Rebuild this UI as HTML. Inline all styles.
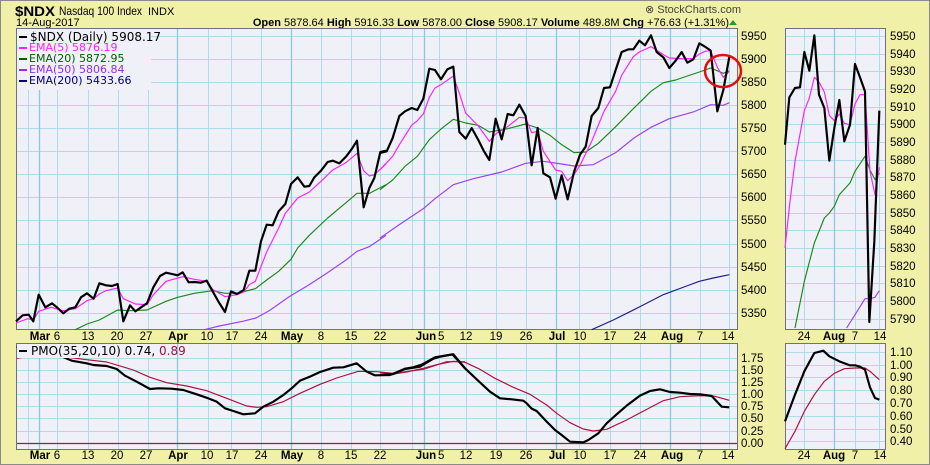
<!DOCTYPE html>
<html><head><meta charset="utf-8"><style>
html,body{margin:0;padding:0;background:#f0f0a8;}
svg{display:block;font-family:"Liberation Sans",sans-serif;}
</style></head><body>
<svg width="930" height="465" viewBox="0 0 930 465" xmlns="http://www.w3.org/2000/svg">
<rect x="0.5" y="0.5" width="929" height="464" fill="#f0f0a8" stroke="#8a8a8a"/>
<!-- header -->
<text x="15" y="16" font-size="14" font-weight="bold" fill="#000" textLength="40" lengthAdjust="spacingAndGlyphs">$NDX</text>
<text x="59" y="15" font-size="12" fill="#000" textLength="83" lengthAdjust="spacingAndGlyphs">Nasdaq 100 Index</text>
<text x="148" y="15" font-size="11" fill="#000">INDX</text>
<text x="16" y="26" font-size="11" fill="#000">14-Aug-2017</text>
<text x="645" y="13" font-size="11" fill="#444">⊗ StockCharts.com</text>
<text x="729" y="26" font-size="11" fill="#000" text-anchor="end"><tspan font-weight="bold">Open</tspan> 5878.64 <tspan font-weight="bold">High</tspan> 5916.33 <tspan font-weight="bold">Low</tspan> 5878.00 <tspan font-weight="bold">Close</tspan> 5908.17 <tspan font-weight="bold">Volume</tspan> 489.8M <tspan font-weight="bold">Chg</tspan> +76.63 (+1.31%)</text>
<polygon points="729,25 737,25 733,20" fill="#2a9a2a"/>

<!-- main panel -->
<rect x="16.5" y="28.5" width="721" height="301" fill="#eff0f8" stroke="#707080"/>
<g stroke="#b0dcea" stroke-width="1">
<path d="M17 36.5H737M17 59.5H737M17 82.5H737M17 105.5H737M17 128.5H737M17 151.5H737M17 174.5H737M17 197.5H737M17 220.5H737M17 244.5H737M17 267.5H737M17 290.5H737M17 313.5H737"/>
<path d="M28.5 29V329M57.5 29V329M88.5 29V329M118.5 29V329M148.5 29V329M208.5 29V329M231.5 29V329M261.5 29V329M321.5 29V329M351.5 29V329M380.5 29V329M412.5 29V329M439.5 29V329M466.5 29V329M496.5 29V329M526.5 29V329M579.5 29V329M610.5 29V329M640.5 29V329M700.5 29V329M729.5 29V329"/>
</g>
<g stroke="#90c8dc" stroke-width="1.3"><path d="M39.5 29V329M177.5 29V329M291.5 29V329M424.5 29V329M556.5 29V329M670.5 29V329"/></g>
<g fill="none" stroke-linejoin="round">
<g transform="translate(16,28) scale(0.33333)">
<polyline stroke="#1a8a1a" stroke-width="3.5" points="178,905 213,888 250,876 305,846 340,848 393,846 450,820 485,808 535,796 590,788 627,796 663,796 718,782 752,756 788,730 825,694 845,660 880,622 935,570 990,524 1023,496 1060,496 1110,470"/>
<polyline stroke="#a040f0" stroke-width="3.5" points="565,905 610,894 680,880 720,870 760,848 820,806 880,770 935,734 990,696 1023,670 1060,656 1110,622"/>
<polyline stroke="#ff20ff" stroke-width="3.5" points="0,885 35,872 52,876 68,850 105,838 140,848 178,842 213,818 233,812 250,798 270,788 305,780 322,812 358,828 393,830 412,800 450,760 500,746 535,754 572,760 590,784 627,806 663,800 683,792 700,770 718,760 752,672 788,600 808,556 845,510 880,492 915,460 950,426 990,404 1023,376 1043,428 1060,444 1075,440 1110,408"/>
<polyline stroke="#000" stroke-width="6.5" points="0,880 20,862 38,860 52,880 68,800 88,838 108,826 125,840 142,856 160,842 178,838 195,808 213,796 233,812 250,766 270,772 288,774 305,768 322,880 342,832 358,850 375,838 393,826 412,778 432,744 450,734 468,738 485,742 500,733 518,763 535,762 555,764 572,758 590,790 608,822 627,852 645,790 663,798 683,786 700,728 718,728 735,640 752,590 770,592 788,550 808,528 825,468 845,448 865,476 880,474 895,448 915,428 935,402 950,398 970,406 990,386 1008,362 1023,338 1043,538 1060,480 1075,450 1093,372 1110,368"/>
</g>
<g transform="translate(380,28) scale(0.33333)">
<polyline stroke="#20208a" stroke-width="3.5" points="635,905 700,876 780,836 850,800 920,774 958,760 1000,750 1048,740"/>
<polyline stroke="#a040f0" stroke-width="3.5" points="0,630 58,590 130,542 165,512 220,470 280,452 365,432 437,406 490,400 545,408 582,414 640,410 707,374 762,330 813,298 868,272 940,252 992,230 1030,232 1048,224"/>
<polyline stroke="#1a8a1a" stroke-width="3.5" points="0,485 38,456 75,415 112,385 148,335 183,303 220,274 257,285 295,292 328,312 383,302 437,288 473,300 510,322 545,350 582,374 617,372 655,346 707,296 762,240 813,190 850,164 887,156 922,144 958,132 992,120 1030,136 1048,128"/>
<polyline stroke="#ff20ff" stroke-width="3.5" points="0,425 38,385 58,350 95,292 112,278 130,258 148,208 165,180 183,170 220,144 238,196 257,255 295,294 328,340 347,318 383,296 418,268 437,270 455,314 473,310 490,370 527,426 545,430 563,458 582,440 600,412 635,340 672,250 707,190 725,142 760,86 778,72 813,56 850,80 868,90 905,92 940,92 958,78 975,70 992,68 1012,118 1030,148 1048,130"/>
<polyline stroke="#000" stroke-width="6.5" points="0,375 20,370 38,330 58,264 75,250 95,240 112,246 130,212 148,122 165,126 183,154 202,124 220,116 238,312 257,332 275,300 295,336 312,370 328,396 347,272 365,334 383,258 400,262 418,230 437,264 455,412 473,300 490,436 510,448 527,512 545,442 563,514 582,432 600,380 617,356 635,264 655,240 672,180 690,178 707,126 725,72 745,64 760,64 778,38 795,52 813,22 830,72 850,88 868,120 887,98 905,72 922,104 940,94 958,46 975,56 992,68 1012,250 1030,186 1048,86"/>
</g>
</g>
<ellipse cx="723" cy="71" rx="18" ry="16" fill="none" stroke="#e01010" stroke-width="2.5"/>
<!-- legend -->
<rect x="17" y="29" width="134" height="61" fill="#eff0f8"/>
<g font-size="11" font-family="'DejaVu Sans','Liberation Sans',sans-serif">
<rect x="19" y="36" width="8" height="2" fill="#000"/><text x="30" y="41" fill="#000" font-size="12">$NDX (Daily) 5908.17</text>
<rect x="19" y="47" width="8" height="2" fill="#ff20ff"/><text x="29" y="51" fill="#ff20ff">EMA(5) 5876.19</text>
<rect x="19" y="58" width="8" height="2" fill="#006000"/><text x="29" y="62" fill="#006000">EMA(20) 5872.95</text>
<rect x="19" y="69" width="8" height="2" fill="#9030e0"/><text x="29" y="73" fill="#9030e0">EMA(50) 5806.84</text>
<rect x="19" y="80" width="8" height="2" fill="#000080"/><text x="29" y="84" fill="#000080">EMA(200) 5433.66</text>
</g>
<!-- main y labels -->
<g font-size="11.5" fill="#000">
<text x="741" y="40">5950</text><text x="741" y="63">5900</text><text x="741" y="86">5850</text><text x="741" y="109">5800</text><text x="741" y="132">5750</text><text x="741" y="155">5700</text><text x="741" y="178">5650</text><text x="741" y="201">5600</text><text x="741" y="224">5550</text><text x="741" y="248">5500</text><text x="741" y="271">5450</text><text x="741" y="294">5400</text><text x="741" y="317">5350</text>
</g>
<!-- date labels -->
<g font-size="11.5" fill="#000" text-anchor="middle">
<g id="d1">
<text x="40" y="340" font-weight="bold" text-anchor="middle">Mar</text><text x="57" y="340">6</text><text x="88" y="340">13</text><text x="117" y="340">20</text><text x="146" y="340">27</text><text x="178" y="340" font-weight="bold">Apr</text><text x="207" y="340">10</text><text x="232" y="340">17</text><text x="261" y="340">24</text><text x="292" y="340" font-weight="bold">May</text><text x="321" y="340">8</text><text x="351" y="340">15</text><text x="380" y="340">22</text><text x="426" y="340" font-weight="bold">Jun</text><text x="438" y="340" text-anchor="start">5</text><text x="466" y="340">12</text><text x="496" y="340">19</text><text x="526" y="340">26</text><text x="557" y="340" font-weight="bold">Jul</text><text x="580" y="340">10</text><text x="610" y="340">17</text><text x="640" y="340">24</text><text x="672" y="340" font-weight="bold">Aug</text><text x="700" y="340">7</text><text x="728" y="340">14</text>
<text x="804" y="340">24</text><text x="834" y="340" font-weight="bold">Aug</text><text x="855" y="340">7</text><text x="880" y="340">14</text>
</g>
<use href="#d1" y="119"/>
</g>

<!-- small panel -->
<rect x="785.5" y="28.5" width="100" height="301" fill="#eff0f8" stroke="#707080"/>
<g stroke="#b0dcea"><path d="M786 36.5H885M786 54.5H885M786 71.5H885M786 89.5H885M786 107.5H885M786 124.5H885M786 142.5H885M786 160.5H885M786 177.5H885M786 195.5H885M786 213.5H885M786 230.5H885M786 248.5H885M786 266.5H885M786 283.5H885M786 301.5H885M786 319.5H885M804.5 29V329M855.5 29V329M879.5 29V329"/></g>
<path d="M834.5 29V329" stroke="#90c8dc" stroke-width="1.3"/>
<g fill="none" stroke-linejoin="round" transform="translate(740,28) scale(0.33333)">
<polyline stroke="#1a8a1a" stroke-width="3.5" points="165,900 193,760 223,645 253,570 268,555 283,535 298,500 330,465 345,430 375,385 390,426 405,455 418,435"/>
<polyline stroke="#a040f0" stroke-width="3.5" points="320,900 345,860 375,812 390,812 405,808 418,788"/>
<polyline stroke="#ff20ff" stroke-width="3.5" points="135,660 150,520 165,400 193,248 208,210 223,148 237,162 253,192 268,262 283,278 298,258 313,286 330,290 345,228 360,200 375,200 390,430 405,500 418,418"/>
<polyline stroke="#000" stroke-width="6.5" points="135,350 148,208 165,180 180,178 193,72 208,128 223,22 237,200 253,240 268,398 283,300 298,216 313,340 330,290 345,108 360,148 375,190 388,882 403,640 418,248"/>
</g>
<g font-size="11.5" fill="#000">
<text x="890" y="40">5950</text><text x="890" y="58">5940</text><text x="890" y="75">5930</text><text x="890" y="93">5920</text><text x="890" y="111">5910</text><text x="890" y="128">5900</text><text x="890" y="146">5890</text><text x="890" y="164">5880</text><text x="890" y="181">5870</text><text x="890" y="199">5860</text><text x="890" y="217">5850</text><text x="890" y="234">5840</text><text x="890" y="252">5830</text><text x="890" y="270">5820</text><text x="890" y="287">5810</text><text x="890" y="305">5800</text><text x="890" y="323">5790</text>
</g>

<!-- lower main -->
<rect x="16.5" y="343.5" width="721" height="106" fill="#eff0f8" stroke="#707080"/>
<g stroke="#b0dcea"><path d="M17 358.5H737M17 370.5H737M17 382.5H737M17 394.5H737M17 406.5H737M17 418.5H737M17 431.5H737"/>
<path d="M28.5 344V449M57.5 344V449M88.5 344V449M118.5 344V449M148.5 344V449M208.5 344V449M231.5 344V449M261.5 344V449M321.5 344V449M351.5 344V449M380.5 344V449M412.5 344V449M439.5 344V449M466.5 344V449M496.5 344V449M526.5 344V449M579.5 344V449M610.5 344V449M640.5 344V449M700.5 344V449M729.5 344V449"/></g>
<g stroke="#90c8dc" stroke-width="1.3"><path d="M39.5 344V449M177.5 344V449M291.5 344V449M424.5 344V449M556.5 344V449M670.5 344V449"/></g>
<path d="M17 443.5H737" stroke="#b01040" stroke-width="1.3"/>
<g fill="none" stroke-linejoin="round">
<g transform="translate(0,300) scale(0.33333)">
<polyline stroke="#b01040" stroke-width="3.5" points="50,175 90,168 120,162 180,168 250,178 320,186 400,210 450,232 500,248 560,258 620,272 680,295 740,318 770,322 800,320 850,305 900,280 960,253 1010,234 1075,214 1130,215 1180,220 1270,208 1340,185 1395,185"/>
<polyline stroke="#000" stroke-width="6.5" points="50,140 120,150 175,165 215,182 260,190 280,195 320,198 350,207 375,227 410,245 450,267 475,265 515,266 550,270 590,283 625,295 650,305 675,325 700,333 730,343 765,340 790,320 820,305 850,285 875,265 900,242 930,230 960,216 1000,203 1030,202 1070,190 1100,215 1125,226 1170,225 1215,207 1260,200 1300,176 1320,170 1357,163 1395,205"/>
</g>
<g transform="translate(380,330) scale(0.33333)">
<polyline stroke="#b01040" stroke-width="3.5" points="0,128 40,132 80,126 130,115 170,104 220,94 255,97 300,118 345,145 400,172 450,193 500,225 530,250 570,278 610,297 640,303 680,298 740,270 800,238 850,212 900,200 960,197 1000,198 1048,211"/>
<polyline stroke="#000" stroke-width="6.5" points="0,135 40,132 75,116 100,112 125,104 165,82 190,78 220,73 255,115 290,148 330,185 360,205 395,208 430,212 440,220 455,236 470,243 500,275 525,300 545,315 570,335 610,337 625,330 655,310 680,280 710,253 740,227 780,197 810,183 840,178 870,186 900,188 930,192 960,193 995,198 1025,230 1048,232"/>
</g>
</g>
<rect x="17" y="344" width="160" height="14" fill="#eff0f8"/>
<rect x="19" y="350" width="8" height="2" fill="#000"/>
<text x="31" y="355" font-size="12" font-family="'DejaVu Sans','Liberation Sans',sans-serif" fill="#000">PMO(35,20,10) 0.74, <tspan fill="#a01040">0.89</tspan></text>
<g font-size="11.5" fill="#000">
<text x="741" y="362">1.75</text><text x="741" y="374">1.50</text><text x="741" y="386">1.25</text><text x="741" y="398">1.00</text><text x="741" y="410">0.75</text><text x="741" y="422">0.50</text><text x="741" y="435">0.25</text><text x="741" y="447">0.00</text>
</g>

<!-- lower small -->
<rect x="785.5" y="343.5" width="100" height="106" fill="#eff0f8" stroke="#707080"/>
<g stroke="#b0dcea"><path d="M786 352.5H885M786 365.5H885M786 377.5H885M786 390.5H885M786 403.5H885M786 416.5H885M786 429.5H885M786 441.5H885M804.5 344V449M855.5 344V449M879.5 344V449"/></g>
<path d="M834.5 344V449" stroke="#90c8dc" stroke-width="1.3"/>
<g fill="none" stroke-linejoin="round" transform="translate(740,28) scale(0.33333)">
<polyline stroke="#b01040" stroke-width="3.5" points="135,1262 165,1210 193,1150 223,1100 253,1060 283,1036 313,1022 345,1020 375,1020 390,1030 418,1055"/>
<polyline stroke="#000" stroke-width="6.5" points="135,1180 165,1100 193,1030 223,975 250,968 268,985 298,1000 330,1012 345,1012 360,1016 375,1025 390,1078 405,1110 418,1115"/>
</g>
<g font-size="11.5" fill="#000">
<text x="890" y="356">1.10</text><text x="890" y="369">1.00</text><text x="890" y="381">0.90</text><text x="890" y="394">0.80</text><text x="890" y="407">0.70</text><text x="890" y="420">0.60</text><text x="890" y="433">0.50</text><text x="890" y="445">0.40</text>
</g>
</svg>
</body></html>
